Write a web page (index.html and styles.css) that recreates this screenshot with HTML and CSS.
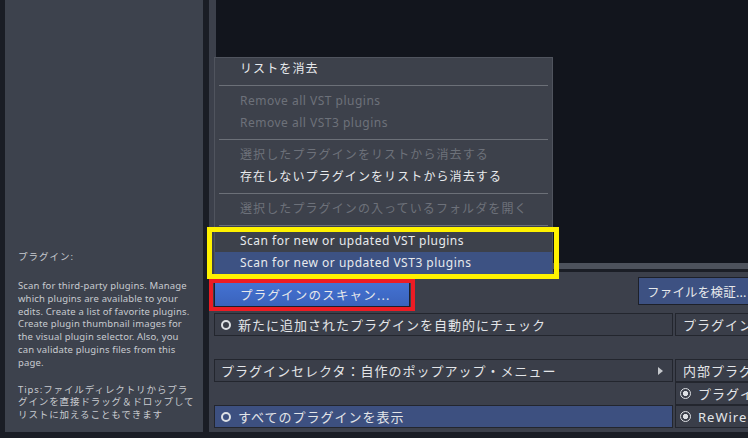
FILE: index.html
```html
<!DOCTYPE html>
<html lang="ja">
  <head>
    <meta charset="UTF-8" />
    <title>プラグイン</title>
    <link rel="stylesheet" href="styles.css">
  </head>
  <body>
    <div class="app">
      <aside class="info">
        <div class="info-panel">
          <p class="info-title">プラグイン:</p>
          <p class="info-text">
            Scan for third-party plugins. Manage<br>
            which plugins are available to your<br>
            edits. Create a list of favorite plugins.<br>
            Create plugin thumbnail images for<br>
            the visual plugin selector. Also, you<br>
            can validate plugins files from this<br>
            page.
          </p>
          <p class="info-tips">
            Tips:ファイルディレクトリからプラ<br>
            グインを直接ドラッグ＆ドロップして<br>
            リストに加えることもできます
          </p>
        </div>
      </aside>

      <main class="pane">
        <div class="viewer"></div>
        <div class="scrollbar"></div>

        <div class="controls">
          <div class="button-row">
            <button class="btn btn-scan">プラグインのスキャン...</button>
            <button class="btn btn-verify">ファイルを検証...</button>
          </div>

          <div class="options">
            <div class="opt"><span class="ring"></span>新たに追加されたプラグインを自動的にチェック</div>
            <div class="opt opt-side">プラグイン</div>

            <div></div>
            <div></div>

            <div class="opt">プラグインセレクタ：自作のポップアップ・メニュー<span class="arrow"></span></div>
            <div class="opt opt-side">内部プラグ</div>

            <div></div>
            <div class="opt opt-side"><span class="radio"></span>プラグイ</div>

            <div class="opt opt-active"><span class="ring"></span>すべてのプラグインを表示</div>
            <div class="opt opt-side"><span class="radio"></span>ReWire</div>
          </div>
        </div>
      </main>
    </div>

    <!-- scan button drop-down -->
    <div class="menu">
      <div class="menu-item">リストを消去</div>
      <div class="menu-sep"></div>
      <div class="menu-item en disabled">Remove all VST plugins</div>
      <div class="menu-item en disabled">Remove all VST3 plugins</div>
      <div class="menu-sep"></div>
      <div class="menu-item disabled">選択したプラグインをリストから消去する</div>
      <div class="menu-item">存在しないプラグインをリストから消去する</div>
      <div class="menu-sep"></div>
      <div class="menu-item disabled">選択したプラグインの入っているフォルダを開く</div>
      <div class="menu-sep"></div>
      <div class="menu-item en">Scan for new or updated VST plugins</div>
      <div class="menu-item en selected">Scan for new or updated VST3 plugins</div>
    </div>

    <div class="mark mark-yellow"></div>
    <div class="mark mark-red"></div>
  </body>
</html>
```

FILE: styles.css
```css
html,
body {
  margin: 0;
  height: 100%;
  overflow: hidden;
  background: #1a1d25;
}

body {
  position: relative;
  font-family: "Noto Sans", "Noto Sans CJK JP", sans-serif;
  color: #e3e5e8;
}

.app {
  display: flex;
  width: 748px;
  height: 432px;
}

/* left help panel */
.info {
  padding-left: 5px;
  margin-right: 6px;
}

.info-panel {
  width: 198px;
  height: 432px;
  box-sizing: border-box;
  background: #3d424d;
  display: flex;
  flex-direction: column;
  justify-content: flex-end;
  padding: 0 0 10px 13px;
  font-size: 9.5px;
  line-height: 12.8px;
  color: #c8cbd0;
  white-space: nowrap;
}

.info-panel p {
  margin: 0;
}

.info-title {
  letter-spacing: 1px;
  margin-bottom: 16px !important;
}

.info-text {
  letter-spacing: 0.15px;
  margin-bottom: 14px !important;
}

.info-tips {
  letter-spacing: 0.9px;
}

/* right side */
.pane {
  flex: 1;
  min-width: 0;
  overflow: hidden;
  background: #3c404b;
  display: flex;
  flex-direction: column;
}

.viewer {
  height: 263px;
  margin-left: 7px;
  background: #12151d;
}

.scrollbar {
  height: 6px;
  margin-left: 7px;
  background: #4d525c;
  border-bottom: 3px solid #1b1e26;
}

.controls {
  padding: 5px 0 0 5px;
}

.button-row {
  display: flex;
  align-items: flex-start;
  height: 30px;
}

.btn {
  font: inherit;
  font-size: 12.5px;
  letter-spacing: 1.2px;
  color: #e6e8eb;
  text-align: left;
  border: 1px solid #1d2029;
  box-sizing: border-box;
  white-space: nowrap;
  overflow: hidden;
  flex: none;
}

.btn-scan {
  width: 196px;
  height: 25px;
  margin-top: 5px;
  padding-left: 25px;
  background: linear-gradient(#4472d2, #3a63bc);
}

.btn-verify {
  width: 110px;
  height: 28px;
  margin-left: 228px;
  padding-left: 8px;
  border-right: none;
  letter-spacing: 0.2px;
  background: #3d5182;
}

.options {
  display: grid;
  grid-template-columns: 459px 1fr;
  grid-template-rows: repeat(5, 23px);
  column-gap: 2px;
  margin-top: 6px;
}

.opt {
  display: flex;
  align-items: center;
  box-sizing: border-box;
  border: 1px solid #23262e;
  background: #3a3e49;
  padding-left: 6px;
  font-size: 13px;
  letter-spacing: 1px;
  white-space: nowrap;
  overflow: hidden;
  color: #e3e5e8;
}

.opt-side {
  padding-left: 7px;
  border-right: none;
}

.opt-active {
  background: #3d5080;
}

.ring {
  width: 10px;
  height: 10px;
  box-sizing: border-box;
  border: 2px solid #dde0e4;
  border-radius: 50%;
  margin-right: 7px;
  flex: none;
}

.radio {
  width: 11px;
  height: 11px;
  box-sizing: border-box;
  border: 1.5px solid #dde0e4;
  border-radius: 50%;
  background: radial-gradient(circle, #dde0e4 0 2.4px, transparent 2.9px);
  margin: 0 7px 0 -3px;
  flex: none;
}

.arrow {
  margin: 0 9px 0 auto;
  border-left: 5px solid #c5c8cc;
  border-top: 4px solid transparent;
  border-bottom: 4px solid transparent;
}

/* drop-down menu */
.menu {
  position: absolute;
  left: 214px;
  top: 57px;
  width: 339px;
  box-sizing: border-box;
  border: 1px solid #50545e;
  background: #3d414b;
  font-size: 12px;
  color: #e8eaed;
}

.menu-item {
  height: 22px;
  line-height: 22px;
  padding-left: 25px;
  letter-spacing: 1.1px;
  white-space: nowrap;
}

.menu-item.en {
  letter-spacing: 0.5px;
}

.menu-item.disabled {
  color: #6d717a;
}

.menu-item.selected {
  background: #3d5283;
}

.menu-sep {
  height: 10px;
  display: flex;
  align-items: center;
  padding: 0 4px;
}

.menu-sep::before {
  content: "";
  flex: 1;
  height: 1px;
  background: #6c7078;
}

/* highlight frames */
.mark {
  position: absolute;
  box-sizing: border-box;
}

.mark-yellow {
  left: 207px;
  top: 227px;
  width: 352px;
  height: 52px;
  border: 5px solid #fff200;
}

.mark-red {
  left: 209px;
  top: 279px;
  width: 206px;
  height: 32px;
  border: 4px solid #ec1c24;
}
```
